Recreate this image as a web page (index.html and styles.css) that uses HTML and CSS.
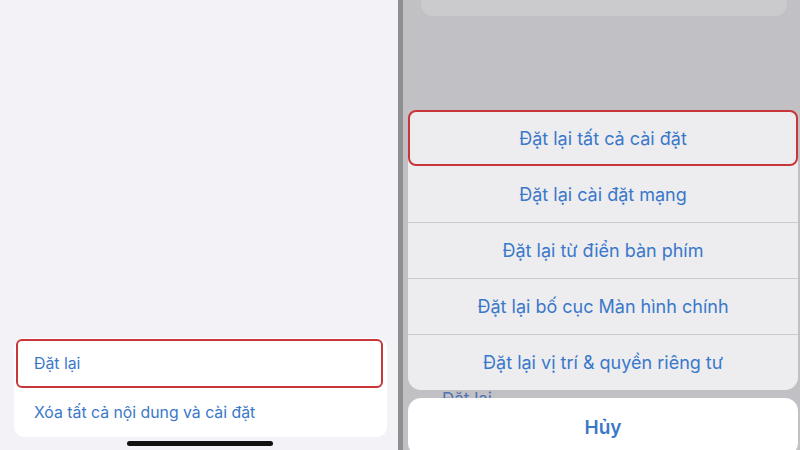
FILE: index.html
```html
<!DOCTYPE html>
<html lang="vi">
<head>
    <meta charset="UTF-8">
    <meta name="viewport" content="width=device-width, initial-scale=1.0">
    <title>Đặt lại</title>
    <link rel="stylesheet" href="styles.css">
</head>
<body>
    <div class="screen">
        <div class="painel-esq">
            <div class="lista">
                <div class="item item-marcado">Đặt lại</div>
                <div class="item">Xóa tất cả nội dung và cài đặt</div>
            </div>
            <div class="home-bar"></div>
        </div>

        <div class="divisor"></div>

        <div class="painel-dir">
            <div class="cartao-topo"></div>

            <div class="folha">
                <div class="opcao opcao-marcada">Đặt lại tất cả cài đặt</div>
                <div class="opcao">Đặt lại cài đặt mạng</div>
                <div class="opcao">Đặt lại từ điển bàn phím</div>
                <div class="opcao">Đặt lại bố cục Màn hình chính</div>
                <div class="opcao">Đặt lại vị trí &amp; quyền riêng tư</div>
            </div>

            <div class="fresta"><span>Đặt lại</span></div>

            <div class="cancelar">Hủy</div>
        </div>
    </div>
</body>
</html>
```

FILE: styles.css
```css
body {
    margin: 0;
    font-family: Inter, "Noto Sans", "Liberation Sans", sans-serif;
    overflow: hidden;
}
.screen {
    display: flex;
    width: 800px;
    height: 450px;
    overflow: hidden;
}
.screen > div {
    flex-shrink: 0;
    box-sizing: border-box;
}
.painel-esq {
    width: 398px;
    background-color: #f2f2f7;
    display: flex;
    flex-direction: column;
    justify-content: flex-end;
    align-items: center;
}
.lista {
    width: 373px;
    align-self: flex-start;
    margin-left: 14px;
    background-color: white;
    border-radius: 10px;
}
.item {
    height: 49px;
    display: flex;
    align-items: center;
    padding-left: 20px;
    font-size: 15.8px;
    color: #3a78c9;
}
.item-marcado {
    height: 45px;
    margin: 1px 4px 0 2px;
    padding-left: 16px;
    border: 2px solid #c9363a;
    border-radius: 6px;
}
.home-bar {
    width: 146px;
    height: 5px;
    background-color: #111;
    border-radius: 3px;
    margin: 4px 0 4px 2px;
}
.divisor {
    width: 5px;
    background-color: #8f8f8f;
}
.painel-dir {
    width: 397px;
    background-color: #c1c0c5;
    padding-left: 5px;
    display: flex;
    flex-direction: column;
    overflow: hidden;
}
.painel-dir > div {
    flex-shrink: 0;
}
.cartao-topo {
    width: 366px;
    height: 16px;
    margin-left: 13px;
    margin-bottom: 94px;
    background-color: #cbcbcd;
    border-radius: 0 0 12px 12px;
}
.folha {
    width: 390px;
    background-color: #ededf0;
    border-radius: 13px;
}
.opcao {
    height: 55px;
    display: flex;
    align-items: center;
    justify-content: center;
    font-size: 18px;
    color: #3a78c9;
    border-top: 1px solid #c9c9cd;
}
.opcao-marcada {
    height: 52px;
    border: 2px solid #c9363a;
    border-radius: 8px;
}
.opcao-marcada + .opcao {
    border-top: none;
    height: 56px;
}
.fresta {
    height: 8px;
    overflow: hidden;
    padding-left: 34px;
    font-size: 17px;
    line-height: 20px;
    color: #4d74ae;
}
.fresta span {
    display: block;
    margin-top: -1px;
}
.cancelar {
    width: 390px;
    height: 58px;
    background-color: white;
    border-radius: 13px;
    display: flex;
    align-items: center;
    justify-content: center;
    font-size: 19px;
    font-weight: 600;
    color: #3a78c9;
}
```
